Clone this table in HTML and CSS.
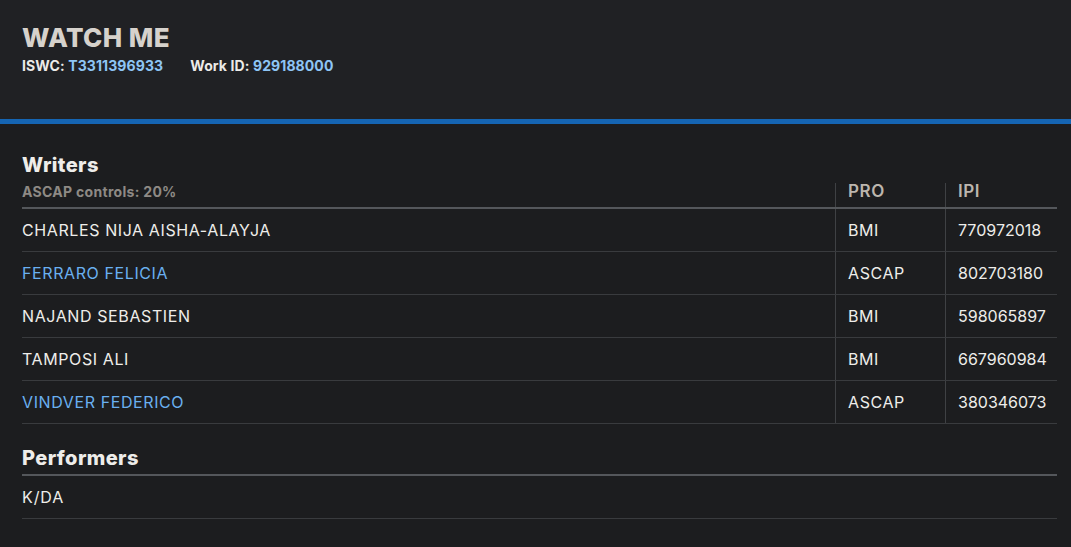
FILE: index.html
```html
<!DOCTYPE html>
<html lang="en">
<head>
    <meta charset="UTF-8">
    <meta name="viewport" content="width=device-width, initial-scale=1.0">
    <title>Watch Me</title>
    <link rel="stylesheet" href="styles.css">
</head>
<body>

    <div class="work-header">
        <h1>WATCH ME</h1>
        <div class="work-ids">
            <span>ISWC: <span class="id-value">T3311396933</span></span>
            <span>Work ID: <span class="id-value">929188000</span></span>
        </div>
    </div>

    <div class="content">
        <h2>Writers</h2>
        <table class="writers">
            <thead>
                <tr>
                    <th class="controls">ASCAP controls: 20%</th>
                    <th class="pro">PRO</th>
                    <th class="ipi">IPI</th>
                </tr>
            </thead>
            <tbody>
                <tr><td>CHARLES NIJA AISHA-ALAYJA</td><td>BMI</td><td>770972018</td></tr>
                <tr><td class="member">FERRARO FELICIA</td><td>ASCAP</td><td>802703180</td></tr>
                <tr><td>NAJAND SEBASTIEN</td><td>BMI</td><td>598065897</td></tr>
                <tr><td>TAMPOSI ALI</td><td>BMI</td><td>667960984</td></tr>
                <tr><td class="member">VINDVER FEDERICO</td><td>ASCAP</td><td>380346073</td></tr>
            </tbody>
        </table>

        <h2 class="performers-title">Performers</h2>
        <div class="performer">K/DA</div>
    </div>

</body>
</html>
```

FILE: styles.css
```css
body {
    margin: 0;
    font-family: Inter, "Noto Sans", sans-serif;
    background-color: #1c1d1f;
    color: #eeedea;
}
.work-header {
    background-color: #202124;
    padding: 24px 22px 0 22px;
    height: 95px;
    border-bottom: 5px solid #1565b3;
}
.work-header h1 {
    margin: 0;
    font-size: 26px;
    font-weight: 800;
    letter-spacing: 0.4px;
    color: #d6d2cc;
    line-height: 28px;
}
.work-ids {
    margin-top: 5px;
    font-size: 14px;
    font-weight: 700;
    letter-spacing: 0.1px;
    color: #ecebe8;
    display: flex;
    gap: 27px;
}
.id-value {
    color: #8ec5f5;
}

.content {
    padding: 0 14px 0 22px;
}
.content h2 {
    margin: 27px 0 0 0;
    font-size: 20px;
    font-weight: 800;
    letter-spacing: 0.4px;
    line-height: 28px;
}
table {
    width: 100%;
    border-collapse: collapse;
    margin-top: 4px;
}
th {
    text-align: left;
    font-weight: 600;
    vertical-align: top;
    height: 23px;
    padding: 0 12px;
    border-bottom: 2px solid #54575b;
    font-size: 17px;
    letter-spacing: 0.6px;
    line-height: 17px;
    color: #bcb6ae;
}
th.controls {
    font-size: 14px;
    font-weight: 700;
    letter-spacing: 0.3px;
    color: #8e8a85;
    padding: 1px 0 0 0;
    line-height: 15px;
}
td {
    height: 42px;
    padding: 0 12px;
    border-bottom: 1px solid #393b3e;
    font-size: 16px;
    letter-spacing: 0.6px;
    vertical-align: middle;
}
td:first-child {
    padding-left: 0;
}
td:nth-child(3) {
    letter-spacing: 0;
}
th.pro, td:nth-child(2) {
    width: 85px;
    border-left: 1px solid #3f4144;
}
th.ipi, td:nth-child(3) {
    width: 93px;
    padding-right: 6px;
    border-left: 1px solid #3f4144;
}
.member {
    color: #6ab0f0;
}
.content h2.performers-title {
    margin-top: 20px;
    padding-bottom: 2px;
    border-bottom: 2px solid #54575b;
}
.performer {
    height: 42px;
    line-height: 42px;
    font-size: 16px;
    letter-spacing: 0.9px;
    border-bottom: 1px solid #393b3e;
}
```
